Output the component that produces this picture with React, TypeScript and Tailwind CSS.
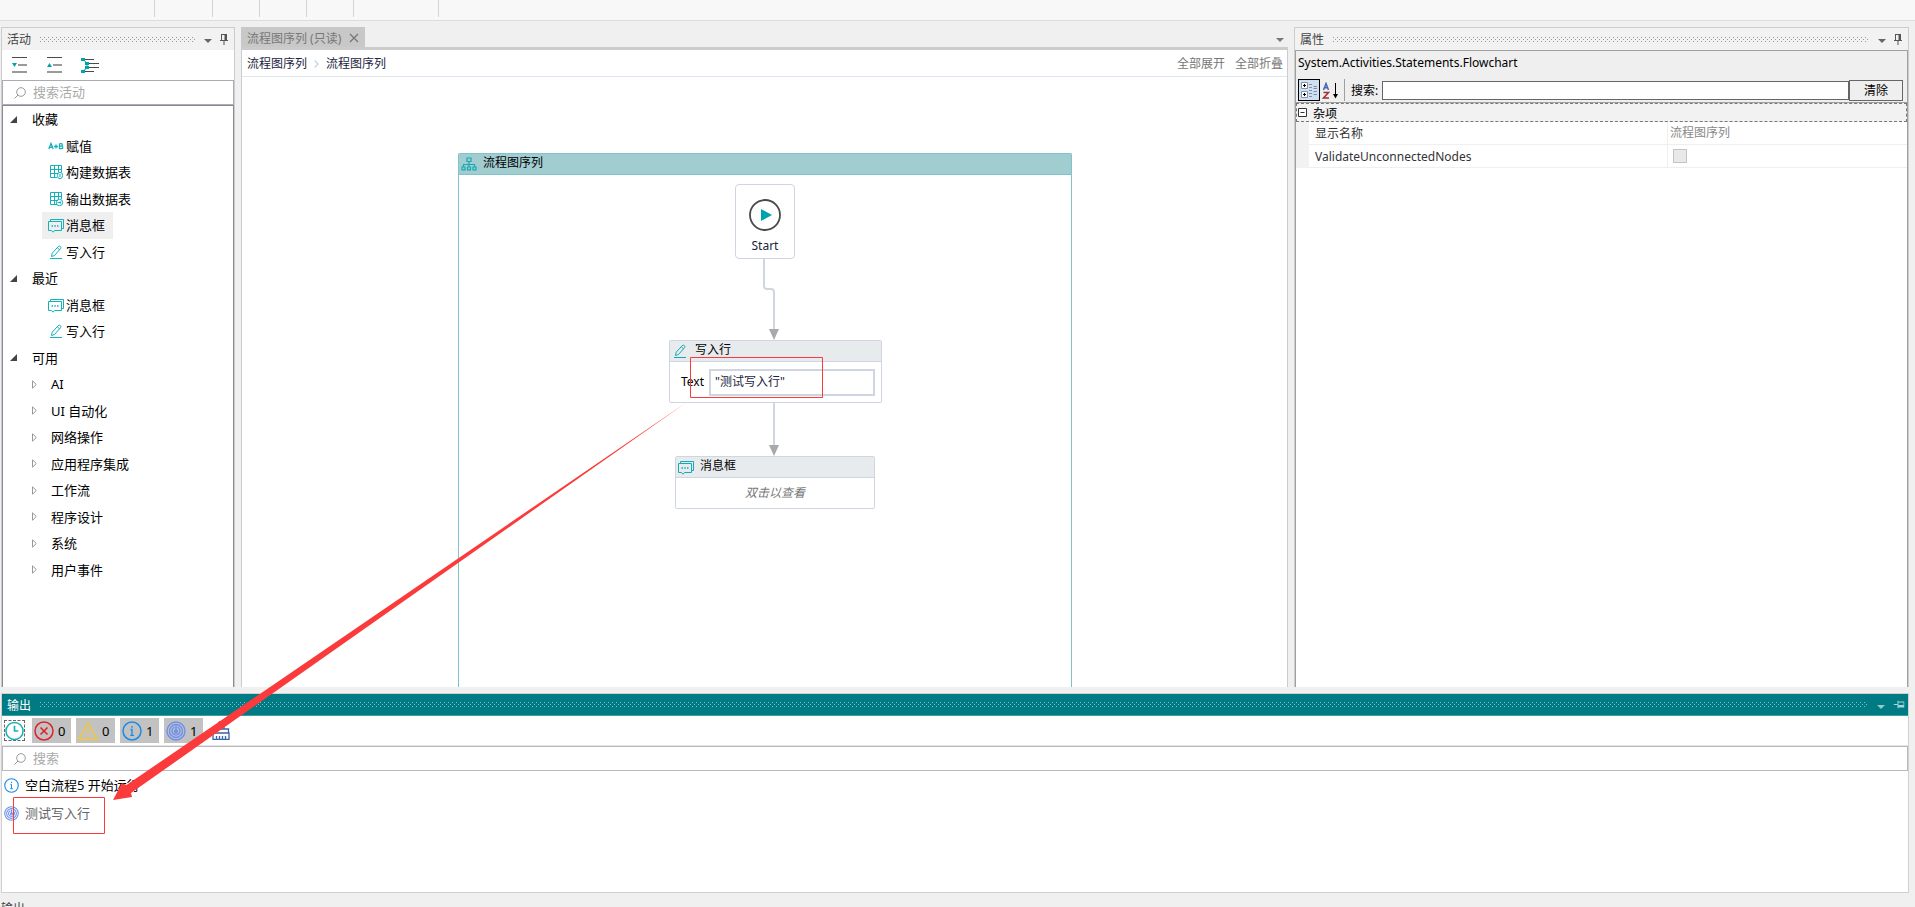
import type { ReactNode } from 'react';
import clsx from 'clsx';

type IconProps = { className?: string };

type TreeRow = {
  label: string;
  depth: 'root' | 'activity' | 'category';
  icon?: (props: IconProps) => ReactNode;
  selected?: boolean;
};

/* Icons */

const CaretIcon = ({ className }: IconProps) => (
  <svg viewBox="0 0 8 4" className={clsx('w-2 h-1', className)} fill="currentColor">
    <path d="M0 0h8L4 4z" />
  </svg>
);

const PinIcon = ({ className }: IconProps) => (
  <svg viewBox="0 0 8 11" className={clsx('w-2 h-[11px]', className)} fill="currentColor">
    <path d="M1 0h6v6h1v1H4.500v4h-1V7H0V6h1zM2 1v5h2.500V1z" fillRule="evenodd" />
  </svg>
);

const SearchIcon = ({ className }: IconProps) => (
  <svg viewBox="0 0 12 12" className={clsx('w-3 h-3', className)} fill="none" stroke="currentColor">
    <circle cx="7" cy="5" r="4.300" />
    <path d="M4 8L.5 11.500" />
  </svg>
);

const ExpandAllIcon = () => (
  <svg viewBox="0 0 18 18" className="w-[18px] h-[18px]">
    <path d="M1 1.500h15" stroke="#4a4a4a" />
    <path d="M7 9h9M1 16h15" stroke="#9a9a9a" strokeWidth="2" />
    <path d="M1 7h5L3.500 11z" fill="#00a3ad" />
  </svg>
);

const CollapseAllIcon = () => (
  <svg viewBox="0 0 18 18" className="w-[18px] h-[18px]">
    <path d="M1 1.500h15" stroke="#4a4a4a" />
    <path d="M7 9h9M1 16h15" stroke="#9a9a9a" strokeWidth="2" />
    <path d="M1 11h5L3.500 7z" fill="#00a3ad" />
  </svg>
);

const TreeViewIcon = () => (
  <svg viewBox="0 0 18 18" className="w-[18px] h-[18px]">
    <path d="M3 3.500h10M8 7.500h10M8 11.500h10M3 15.500h10" stroke="#4a4a4a" />
    <path d="M2 3.500L6 7v5l-4 3" stroke="#00a3ad" fill="none" />
    <path d="M0 2h4v3H0zM4 6h4v3H4zM4 10h4v3H4zM0 14h4v3H0z" fill="#00a3ad" />
  </svg>
);

const AssignIcon = ({ className }: IconProps) => (
  <svg viewBox="0 0 16 16" className={clsx('w-4 h-4', className)} fill="none" stroke="currentColor" strokeWidth="1.300">
    <path d="M.8 11L3 5.500 5.200 11M1.500 9.300h3M6 8.500h4M8 6.500v4M11.500 5.700v5h2a1.300 1.300 0 0 0 0-2.600h-2M11.500 5.700h1.700a1.100 1.100 0 0 1 0 2.300" />
  </svg>
);

const BuildTableIcon = ({ className }: IconProps) => (
  <svg viewBox="0 0 16 16" className={clsx('w-4 h-4', className)} fill="none" stroke="currentColor">
    <path d="M9 13.500H2.500v-12h11V8M2.500 5.500h11M2.500 9.500H10M6.500 1.500v12M10.500 1.500V8" />
    <ellipse cx="12" cy="11.500" rx="2.500" ry="3.300" />
    <path d="M12 9.800v3.400" />
  </svg>
);

const OutputTableIcon = ({ className }: IconProps) => (
  <svg viewBox="0 0 16 16" className={clsx('w-4 h-4', className)} fill="none" stroke="currentColor">
    <path d="M9 13.500H2.500v-12h11V8M2.500 5.500h11M2.500 9.500H10M6.500 1.500v12M10.500 1.500V8" />
    <circle cx="11.500" cy="11.500" r="3.200" />
    <path d="M9.500 11.500h3.500M11.700 10.200l1.400 1.300-1.400 1.300" />
  </svg>
);

const MessageIcon = ({ className }: IconProps) => (
  <svg viewBox="0 0 16 16" className={clsx('w-4 h-4', className)} fill="none" stroke="currentColor">
    <path d="M.5 4.500h13v9H6.500L5 15.200 3.500 13.500h-3zM2.500 4.500v-2h13v9h-2" />
    <path d="M3.500 9h1.500M6.300 9h1.500M9 9h1.500" strokeWidth="1.300" />
  </svg>
);

const WriteIcon = ({ className }: IconProps) => (
  <svg viewBox="0 0 16 16" className={clsx('w-4 h-4', className)} fill="none" stroke="currentColor">
    <path d="M3.500 12.500l.7-3.300 6-6.500a1.500 1.500 0 0 1 2.300 2l-6 6.800zM9.300 3.800l2.200 2" />
    <path d="M2 14.500h12" />
  </svg>
);

const FlowchartIcon = ({ className }: IconProps) => (
  <svg viewBox="0 0 16 16" className={clsx('w-4 h-4', className)} fill="none" stroke="currentColor" strokeWidth="1.200">
    <path d="M6 2h4v3.500H6zM8 5.500V11M2.500 11V8.500h11V11M1 11h3v2.800H1zM6.500 11h3v2.800h-3zM12 11h3v2.800h-3z" />
  </svg>
);

const ClockIcon = () => (
  <svg viewBox="0 0 20 20" className="w-5 h-5" fill="none" stroke="#1ab0b8" strokeWidth="1.600">
    <circle cx="10" cy="10" r="9" />
    <path d="M10 4.500V10h4" strokeWidth="1.800" />
  </svg>
);

const ErrorIcon = ({ className }: IconProps) => (
  <svg viewBox="0 0 20 20" className={className} fill="none" stroke="#e0202c" strokeWidth="1.500">
    <circle cx="10" cy="10" r="9" />
    <path d="M6.500 6.500l7 7M13.500 6.500l-7 7" strokeWidth="1.600" />
  </svg>
);

const WarningIcon = ({ className }: IconProps) => (
  <svg viewBox="0 0 20 20" className={className} fill="none" stroke="#f3c737" strokeWidth="1.400">
    <path d="M10 1.500L19.200 18.500H.8z" />
    <path d="M10 7.500v6M10 15v1.500" />
  </svg>
);

const InfoIcon = ({ className }: IconProps) => (
  <svg viewBox="0 0 20 20" className={className} fill="none" stroke="#1a8ae8" strokeWidth="1.500">
    <circle cx="10" cy="10" r="9" />
    <path d="M8.500 8.500H10V14M8.300 14.300h3.600M10 5v1.800" strokeWidth="1.300" />
  </svg>
);

const TraceIcon = ({ className }: IconProps) => (
  <svg viewBox="0 0 20 20" className={className} fill="none" stroke="#6b8ff0" strokeWidth="1.400">
    <circle cx="10" cy="10" r="9" />
    <circle cx="10" cy="10" r="6.500" />
    <path d="M8.500 6.200A4 4 0 1 0 11.500 6.200M10 4.500V11" />
    <circle cx="10" cy="10.500" r="1.500" />
  </svg>
);

const BroomIcon = () => (
  <svg viewBox="0 0 18 20" className="w-[18px] h-5" fill="none" stroke="#3c62a8" strokeWidth="1.300">
    <path d="M6 8V3.500a3 3 0 0 1 6 0V8M1.500 12V8h15v4M1 12h16v6.300H1zM4.500 18v-3M7.500 18v-3M10.500 18v-3M13.500 18v-3" />
  </svg>
);

const Grip = ({ active }: { active?: boolean }) => (
  <svg className="h-[5px] flex-1 min-w-0">
    <defs>
      <pattern id={active ? 'grip-active' : 'grip'} width="4" height="4" patternUnits="userSpaceOnUse">
        <path d="M0 0h1v1H0zM2 2h1v1H2z" fill={active ? '#7fc0c4' : '#999'} />
      </pattern>
    </defs>
    <rect width="100%" height="5" fill={active ? 'url(#grip-active)' : 'url(#grip)'} />
  </svg>
);

/* Data */

const treeRows: TreeRow[] = [
  { label: '收藏', depth: 'root' },
  { label: '赋值', depth: 'activity', icon: AssignIcon },
  { label: '构建数据表', depth: 'activity', icon: BuildTableIcon },
  { label: '输出数据表', depth: 'activity', icon: OutputTableIcon },
  { label: '消息框', depth: 'activity', icon: MessageIcon, selected: true },
  { label: '写入行', depth: 'activity', icon: WriteIcon },
  { label: '最近', depth: 'root' },
  { label: '消息框', depth: 'activity', icon: MessageIcon },
  { label: '写入行', depth: 'activity', icon: WriteIcon },
  { label: '可用', depth: 'root' },
  { label: 'AI', depth: 'category' },
  { label: 'UI 自动化', depth: 'category' },
  { label: '网络操作', depth: 'category' },
  { label: '应用程序集成', depth: 'category' },
  { label: '工作流', depth: 'category' },
  { label: '程序设计', depth: 'category' },
  { label: '系统', depth: 'category' },
  { label: '用户事件', depth: 'category' },
];

const counters = [
  { label: '错误', count: 0, icon: ErrorIcon },
  { label: '警告', count: 0, icon: WarningIcon },
  { label: '信息', count: 1, icon: InfoIcon },
  { label: '跟踪', count: 1, icon: TraceIcon },
];

const ribbonGroups = ['w-[155px]', 'w-[58px]', 'w-[47px]', 'w-[47px]', 'w-[47px]', 'w-[85px]'];

/* Panels */

const PanelHeader = ({ title }: { title: string }) => (
  <div className="h-[22px] shrink-0 flex items-center pl-[5px] pr-1.5 bg-[#f2f2f2] text-[#444]">
    <h2 className="text-xs leading-5 mt-0.5 mr-[9px]">{title}</h2>
    <Grip />
    <button type="button" aria-label="菜单" className="ml-[9px] mt-1 text-[#666]"><CaretIcon /></button>
    <button type="button" aria-label="固定" className="ml-2 text-[#555]"><PinIcon /></button>
  </div>
);

const ActivitiesPanel = () => (
  <section className="w-[234px] shrink-0 flex flex-col bg-white border border-[#ccc] border-b-0">
    <PanelHeader title="活动" />

    <div className="h-[30px] shrink-0 flex items-center gap-[17px] pl-[9px]">
      <button type="button" aria-label="全部展开"><ExpandAllIcon /></button>
      <button type="button" aria-label="全部折叠"><CollapseAllIcon /></button>
      <button type="button" aria-label="树视图"><TreeViewIcon /></button>
    </div>

    <label className="h-[25px] shrink-0 flex items-center border border-[#ababb3] pl-[11px] text-[#999]">
      <SearchIcon />
      <input
        placeholder="搜索活动"
        aria-label="搜索活动"
        className="flex-1 min-w-0 ml-[7px] pb-0.5 text-[13px] leading-5 placeholder:text-[#aaa] outline-none"
      />
    </label>

    <div className="flex-1 border border-b-0 border-[#888b93]">
      <ul className="grid auto-rows-fr h-[477px] text-[13px] leading-5 text-black">
        {treeRows.map((row, i) => {
          const Icon = row.icon;
          return (
            <li key={i} className="flex">
              {row.depth === 'root' && (
                <button type="button" className="flex items-center pl-[7px]">
                  <svg viewBox="0 0 7 7" className="w-[7px] h-[7px] mr-[15px]"><path d="M7 0v7H0z" fill="#444" /></svg>
                  {row.label}
                </button>
              )}
              {row.depth === 'category' && (
                <button type="button" className="flex items-center pl-[29px]">
                  <svg viewBox="0 0 5 9" className="w-[5px] h-[9px] mr-[14px]" fill="none" stroke="#999">
                    <path d="M.5 .8v7.400L4.300 4.500z" />
                  </svg>
                  {row.label}
                </button>
              )}
              {Icon && (
                <button
                  type="button"
                  className={clsx('flex items-center ml-[39px] pl-1.5 pr-2', row.selected && 'bg-[#efefef]')}
                >
                  <Icon className="mr-0.5 text-[#14b0bb]" />
                  {row.label}
                </button>
              )}
            </li>
          );
        })}
      </ul>
    </div>
  </section>
);

const Designer = () => (
  <section className="flex-1 min-w-0 flex flex-col">
    <div className="h-[23px] shrink-0 flex items-start justify-between border-b-[3px] border-[#ccc]">
      <div className="h-5 flex items-center bg-[#c8c8c8] px-1.5 text-[#777]">
        <span className="text-xs leading-5 mt-1">流程图序列 (只读)</span>
        <button type="button" aria-label="关闭" className="ml-2 mt-0.5">
          <svg viewBox="0 0 10 10" className="w-2.5 h-2.5" stroke="currentColor" strokeWidth="1.300">
            <path d="M1 1l8 8M9 1L1 9" />
          </svg>
        </button>
      </div>
      <button type="button" aria-label="标签列表" className="mt-[11px] mr-1 text-[#777]"><CaretIcon /></button>
    </div>

    <div className="flex-1 min-h-0 flex flex-col bg-white border-x border-[#ccc]">
      <nav className="h-[27px] shrink-0 flex items-center border-b border-[#dce4ee] pt-0.5 pl-[5px] pr-1 text-xs leading-5 text-[#1b2440]">
        <a href="#root">流程图序列</a>
        <svg viewBox="0 0 5 8" className="w-[5px] h-2 mx-[7px]" fill="none" stroke="#cfd5e2" strokeWidth="1.500">
          <path d="M.7 .5L4 4 .7 7.500" />
        </svg>
        <a href="#current">流程图序列</a>
        <div className="ml-auto flex gap-2.5 text-[#777]">
          <button type="button">全部展开</button>
          <button type="button">全部折叠</button>
        </div>
      </nav>

      <div className="flex-1 min-h-0 flex justify-center pt-[76px] pl-px">
        <div className="w-[614px] flex flex-col border border-b-0 border-[#80c4c9] rounded-t-xs">
          <div className="h-[21px] shrink-0 flex items-center bg-[#a2cdd0] border-b border-[#80c4c9] pl-0.5">
            <FlowchartIcon className="text-[#16aab4]" />
            <h3 className="ml-1.5 mb-0.5 text-xs leading-5 text-black">流程图序列</h3>
          </div>
          <FlowCanvas />
        </div>
      </div>
    </div>
  </section>
);

const FlowCanvas = () => (
  <div className="relative flex-1 overflow-hidden text-xs leading-5">
    <svg className="absolute inset-0 w-full h-full" fill="none" stroke="#d0d5e2" strokeWidth="2">
      <path d="M305 84v27q0 3 3 3h4q3 0 3 3v39M315 228v44" />
      <path d="M310 154h10l-5 11zM310 270h10l-5 11z" fill="#a9a9a9" stroke="none" />
    </svg>

    {/* Start */}
    <div className="absolute left-[276px] top-[9px] w-[60px] h-[75px] flex flex-col items-center bg-white border border-[#d0d5e2] rounded pt-3.5">
      <svg viewBox="0 0 32 32" className="w-8 h-8" fill="none">
        <circle cx="16" cy="16" r="15" stroke="#4a4a4a" strokeWidth="1.800" />
        <path d="M12 10l11 6-11 6z" fill="#00a3ad" />
      </svg>
      <span className="mt-[5px] text-[#1b2440]">Start</span>
    </div>

    {/* Write line */}
    <div className="absolute left-[210px] top-[165px] w-[213px] h-[63px] flex flex-col bg-white border border-[#d0d5e2] rounded-xs">
      <div className="h-[21px] shrink-0 flex items-center bg-[#e7ebee] border-b border-[#d0d5e2] pl-0.5">
        <WriteIcon className="text-[#16aab4]" />
        <span className="ml-[7px] mb-0.5 text-black">写入行</span>
      </div>
      <label className="flex-1 flex items-center pl-[11px] pr-1.5 text-black">
        Text
        <input
          readOnly
          defaultValue={'"测试写入行"'}
          className="flex-1 min-w-0 h-[27px] ml-[5px] px-1 pb-0.5 bg-white border-2 border-[#d0d5e2] text-[#1b2440] outline-none"
        />
      </label>
    </div>

    {/* Message box */}
    <div className="absolute left-[216px] top-[281px] w-[200px] h-[53px] flex flex-col bg-white border border-[#d0d5e2] rounded-xs">
      <div className="h-[21px] shrink-0 flex items-center bg-[#e7ebee] border-b border-[#d0d5e2] pl-0.5">
        <MessageIcon className="text-[#16aab4]" />
        <span className="ml-1.5 mb-0.5 text-black">消息框</span>
      </div>
      <p className="flex-1 flex items-center justify-center italic text-[#777]">双击以查看</p>
    </div>
  </div>
);

const PropertiesPanel = () => (
  <section className="w-[615px] shrink-0 flex flex-col bg-white border border-[#ccc] border-b-0">
    <PanelHeader title="属性" />

    <div className="flex-1 flex flex-col border border-b-0 border-[#a0a0a0] text-xs">
      <div className="h-[52px] shrink-0 bg-[#efefef] border-b border-[#a0a0a0] pl-0.5 pr-1">
        <p className="leading-6 text-black">System.Activities.Statements.Flowchart</p>
        <div className="flex items-center mt-1">
          <button type="button" aria-label="按类别" className="w-[22px] h-[22px] p-0.5 bg-[#cfe0f2] border border-black">
            <svg viewBox="0 0 16 16" className="w-4 h-4">
              <path d="M.5 .5h6v6h-6zM.5 9.500h6v6h-6z" fill="#fff" stroke="#8a93a5" />
              <path d="M2 3.500h3M3.500 2v3M2 12.500h3M3.500 11v3" stroke="#000" />
              <path d="M8 2.500h3M8 5.500h3M8 8.500h3M8 11.500h3M8 14.500h3M12.500 4.500H16M12.500 6.500H16M12.500 9.500H16M12.500 12.500H16" stroke="#7e8fae" />
            </svg>
          </button>
          <button type="button" aria-label="按字母" className="w-[22px] h-[22px] p-0.5">
            <svg viewBox="0 0 17 17" className="w-[17px] h-[17px]" fill="none" strokeWidth="1.500">
              <path d="M1.500 8L4 1.500 6.500 8M2.500 5.800h3" stroke="#4467b5" />
              <path d="M1.500 10.500h5l-5 5.500h5.500" stroke="#a03038" />
              <path d="M13.500 1v14" stroke="#000" strokeWidth="1" />
              <path d="M11 12h5l-2.500 4.500z" fill="#000" />
            </svg>
          </button>
          <span className="w-px h-[22px] ml-0.5 bg-[#a0a0a0]" />
          <label htmlFor="prop-search" className="ml-1.5 mr-1 mt-0.5 leading-5 text-black">搜索:</label>
          <input id="prop-search" className="flex-1 min-w-0 h-[19px] bg-white border border-[#666] px-1 outline-none" />
          <button type="button" className="w-[54px] h-[21px] bg-[#efefef] border border-[#666] leading-[19px] text-black">
            清除
          </button>
        </div>
      </div>

      <button
        type="button"
        className="h-[19px] shrink-0 flex items-center bg-[#f2f2f2] border border-dashed border-[#777] pl-px leading-4 text-[#222]"
      >
        <svg viewBox="0 0 9 9" className="w-[9px] h-[9px] mr-1.5" fill="#fff" stroke="#333">
          <path d="M.5 .5h8v8h-8zM2.500 4.500h4" />
        </svg>
        <span className="mt-0.5 font-medium">杂项</span>
      </button>

      <table className="w-full table-fixed border-collapse text-[#333] leading-5">
        <tbody>
          <tr className="h-[22px]">
            <th scope="row" className="w-[365px] p-0 pt-0.5 pl-1.5 text-left font-normal border-l-[13px] border-l-[#f2f2f2] border-b border-b-[#efefef]">
              显示名称
            </th>
            <td className="p-0 pl-0.5 border-l border-b border-[#efefef] text-[#888]">流程图序列</td>
          </tr>
          <tr className="h-[22px]">
            <th scope="row" className="p-0 pt-0.5 pl-1.5 text-left font-normal border-l-[13px] border-l-[#f2f2f2] border-b border-b-[#efefef]">
              <label htmlFor="validate-nodes">ValidateUnconnectedNodes</label>
            </th>
            <td className="p-0 pl-[5px] border-l border-b border-[#efefef]">
              <input
                id="validate-nodes"
                type="checkbox"
                disabled
                className="block appearance-none w-3.5 h-3.5 bg-[#e8e8e8] border border-[#c4c4c4]"
              />
            </td>
          </tr>
        </tbody>
      </table>
    </div>
  </section>
);

const OutputPanel = () => (
  <section className="h-[200px] shrink-0 flex flex-col bg-white border border-[#d0d0d0]">
    <div className="h-[22px] shrink-0 flex items-center bg-[#007b83] border-b border-[#3f9ca2] px-[5px] text-white">
      <h2 className="text-xs leading-5 mt-0.5 mr-[9px]">输出</h2>
      <Grip active />
      <button type="button" aria-label="菜单" className="ml-[9px] mt-1 text-[#8ecbd0]"><CaretIcon /></button>
      <button type="button" aria-label="固定" className="ml-2.5 text-[#a5d5d8]"><PinIcon className="rotate-90" /></button>
    </div>

    <div className="h-[30px] shrink-0 flex items-center pl-0.5 border-b border-[#e6e6e8]">
      <button type="button" aria-label="时间戳" className="w-[21px] h-[21px] mr-[7px] border border-dashed border-[#666] flex items-center justify-center">
        <ClockIcon />
      </button>
      <div className="flex gap-[5px]">
        {counters.map((counter) => {
          const Icon = counter.icon;
          return (
            <button
              key={counter.label}
              type="button"
              title={counter.label}
              className="w-[39px] h-[25px] flex items-center bg-[#c2c2c2] pl-0.5 text-[13px] leading-5 text-black"
            >
              <Icon className="w-5 h-5 mr-1" />
              {counter.count}
            </button>
          );
        })}
      </div>
      <button type="button" aria-label="清除" className="ml-[9px]"><BroomIcon /></button>
    </div>

    <label className="h-[25px] shrink-0 flex items-center border border-[#b8b8bf] pl-[11px] text-[#999]">
      <SearchIcon />
      <input
        placeholder="搜索"
        aria-label="搜索"
        className="flex-1 min-w-0 ml-[7px] pb-0.5 text-[13px] leading-5 placeholder:text-[#aaa] outline-none"
      />
    </label>

    <ul className="text-[13px] leading-7">
      <li className="flex items-center pl-0.5 text-black">
        <InfoIcon className="w-[15px] h-[15px] mr-1.5" />
        空白流程5 开始运行
      </li>
      <li className="flex items-center pl-0.5 text-[#666]">
        <TraceIcon className="w-[15px] h-[15px] mr-1.5" />
        测试写入行
      </li>
    </ul>
  </section>
);

/* Red markup drawn over the window */
const Annotations = () => (
  <svg className="absolute inset-0 w-full h-full pointer-events-none" fill="none" stroke="#fb3b3b">
    <path d="M690.500 357.500h132v40h-132zM13.500 797.500h91v36h-91z" />
    <path d="M113 800L122 783 126.500 785 687 402 131 793 132 797z" fill="#fb3b3b" stroke="none" />
  </svg>
);

const App = () => {
  return (
    <div className="relative h-screen flex flex-col overflow-hidden bg-[#f0f0f0] font-['Noto_Sans','Noto_Sans_CJK_SC',sans-serif]">
      {/* Ribbon */}
      <div className="h-[21px] shrink-0 flex bg-[#f8f8f8] border-b border-[#dcdcdc]">
        {ribbonGroups.map((width, i) => (
          <div key={i} className={clsx('h-[17px] border-r border-[#d4d4d4]', width)} />
        ))}
      </div>

      <main className="flex-1 min-h-0 flex flex-col gap-1.5 pt-1.5 pl-px pr-1.5">
        <div className="flex-1 min-h-0 flex gap-1.5">
          <ActivitiesPanel />
          <Designer />
          <PropertiesPanel />
        </div>
        <OutputPanel />
      </main>

      <footer className="h-3.5 shrink-0 overflow-hidden pt-1.5 pl-px text-xs leading-5 text-[#444]">输出</footer>

      <Annotations />
    </div>
  );
};

export default App;
